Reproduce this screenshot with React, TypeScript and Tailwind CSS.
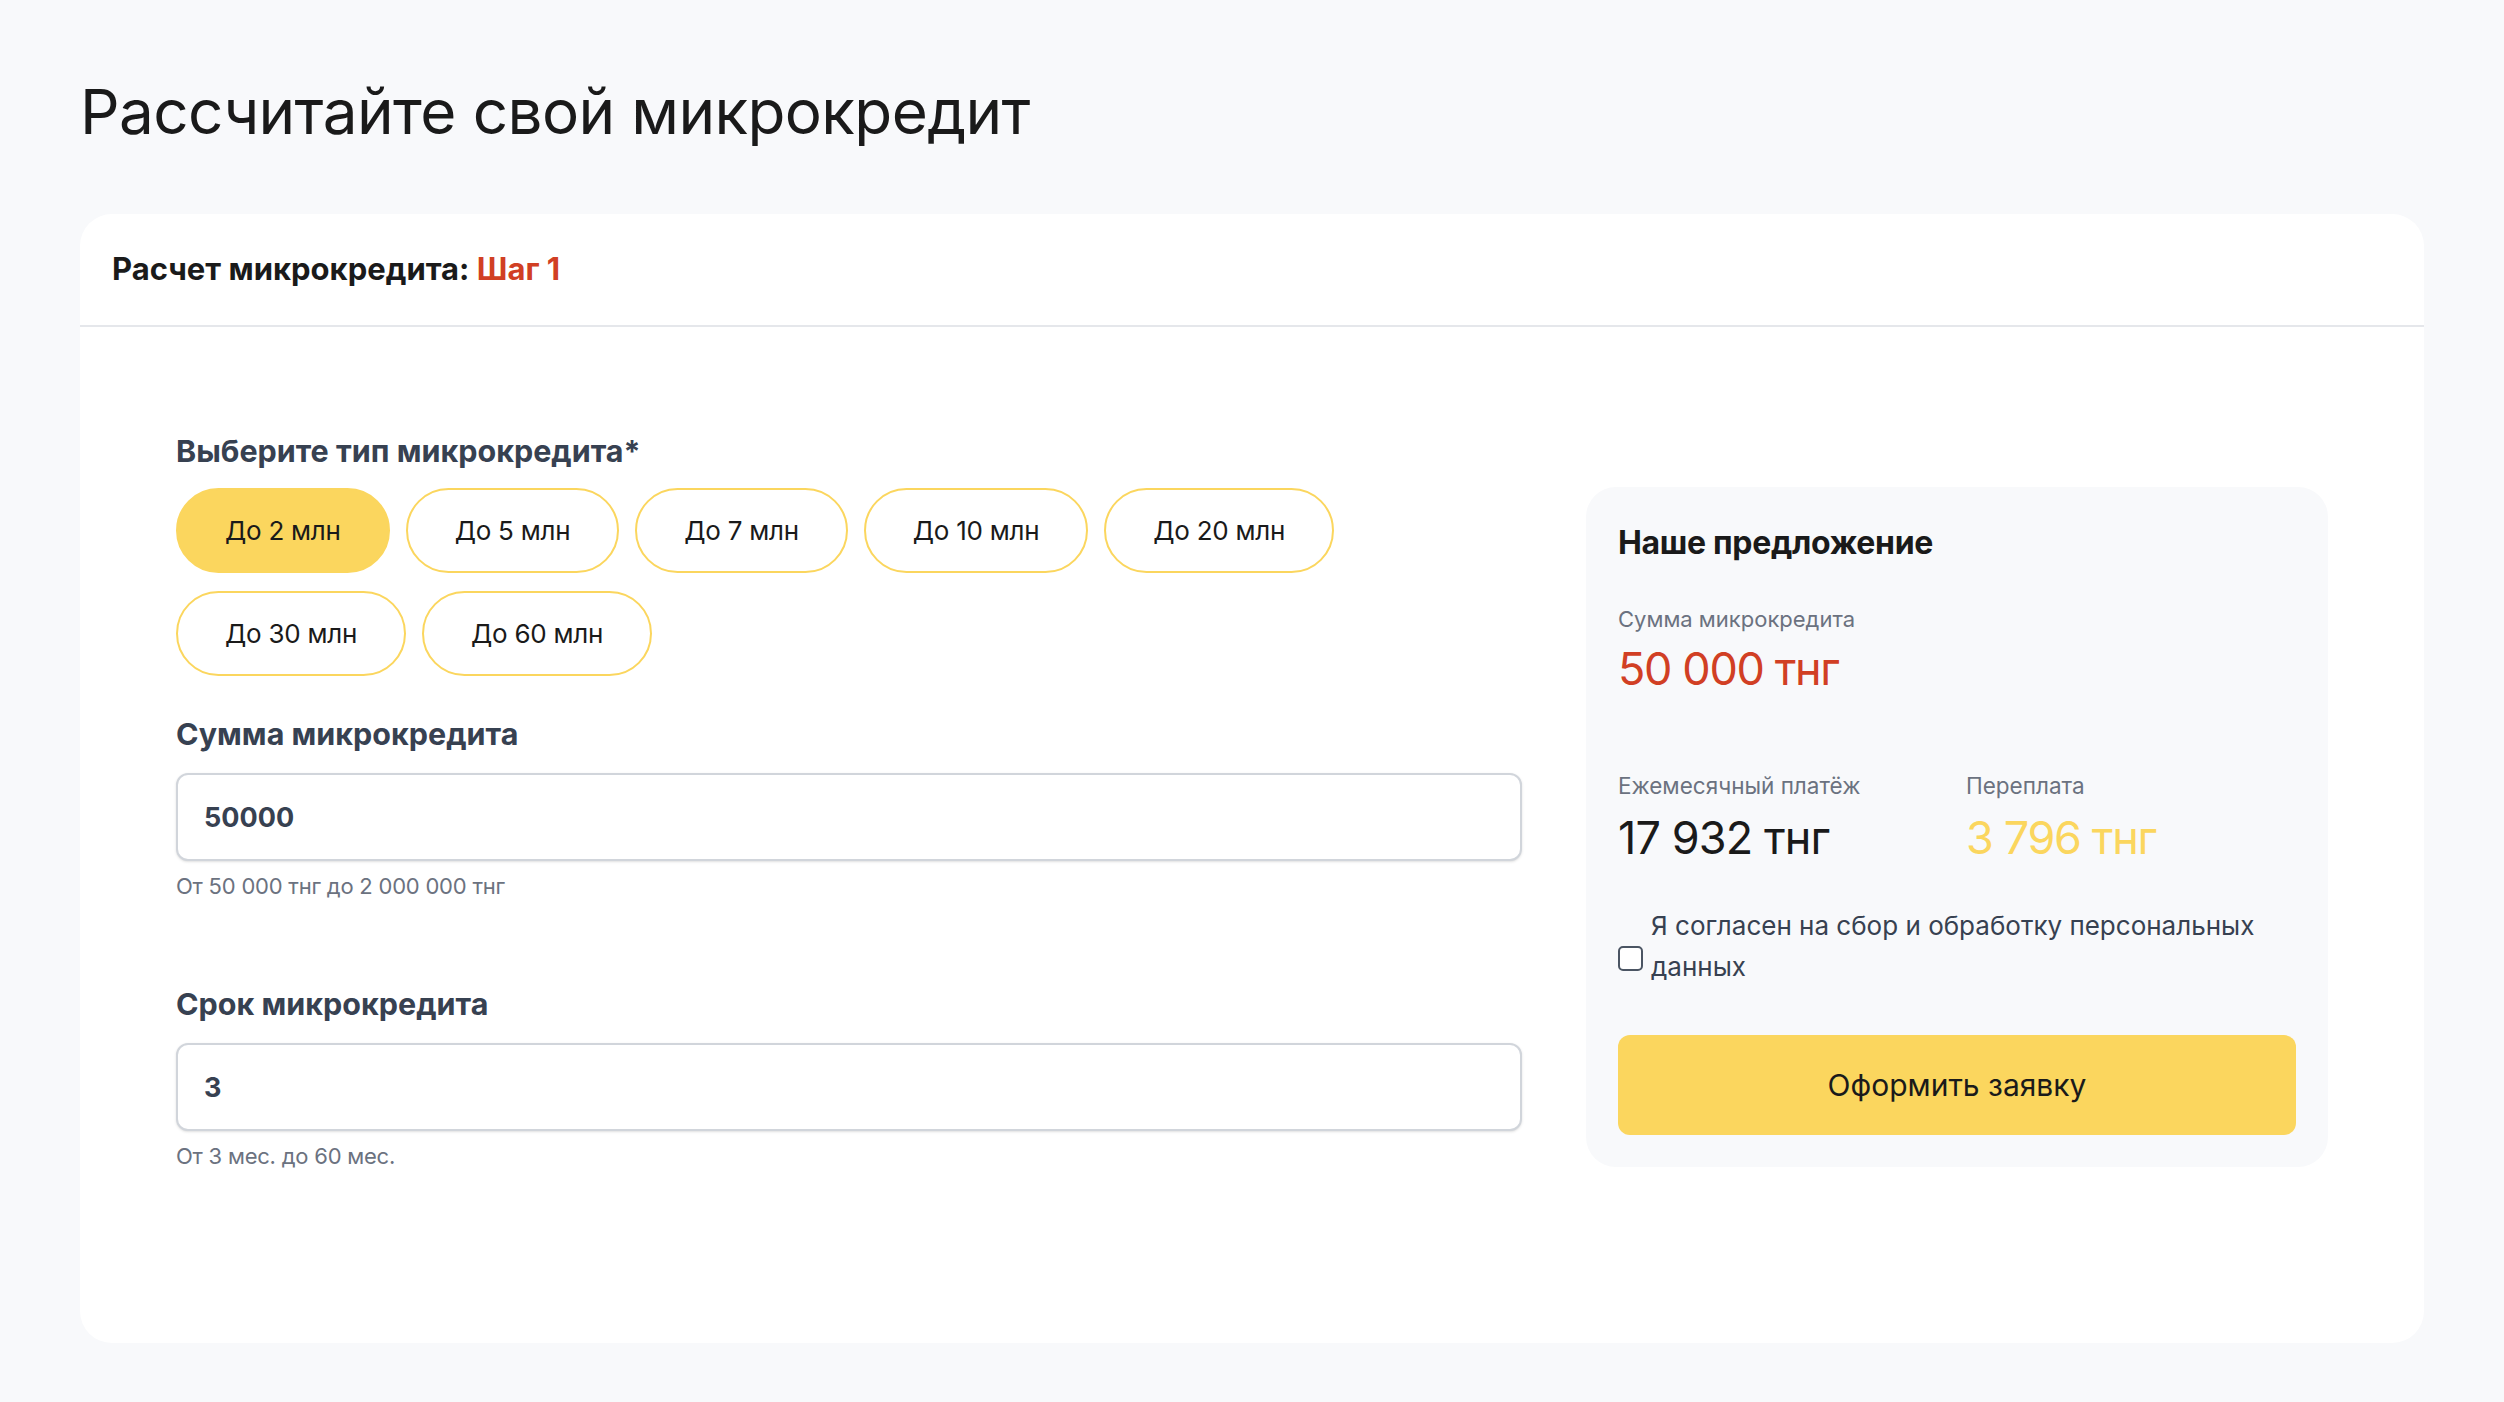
import { useState } from "react";

const types = [
  "До 2 млн",
  "До 5 млн",
  "До 7 млн",
  "До 10 млн",
  "До 20 млн",
  "До 30 млн",
  "До 60 млн",
];

export default function App() {
  const [selected, setSelected] = useState(0);
  const [amount, setAmount] = useState("50000");
  const [term, setTerm] = useState("3");
  const [agree, setAgree] = useState(false);

  return (
    <div className="min-h-screen bg-[#f8f9fb] px-20 pt-[74px] pb-16 font-['Inter','Noto_Sans',sans-serif] text-[#1a1a1a]">
      <h1 className="text-[62px] leading-[75px] tracking-[-0.01em] font-normal">
        Рассчитайте свой микрокредит
      </h1>

      <div className="mt-[65px] rounded-[32px] bg-white">
        {/* Header */}
        <div className="flex h-[113px] items-center border-b-2 border-[#e5e7eb] px-8">
          <h2 className="text-[31px] font-bold">
            Расчет микрокредита: <span className="text-[#d13f24]">Шаг 1</span>
          </h2>
        </div>

        {/* Body */}
        <div className="grid grid-cols-[1fr_742px] items-start gap-x-16 px-24 pt-[104px] pb-[172px]">
          <div>
            <p className="text-[30.5px] leading-[39px] font-bold text-[#374151]">
              Выберите тип микрокредита*
            </p>
            <div className="mt-[18px] flex max-w-[1200px] flex-wrap gap-x-4 gap-y-[18px]">
              {types.map((t, i) => (
                <button
                  key={t}
                  onClick={() => setSelected(i)}
                  className={
                    i === selected
                      ? "h-[85px] rounded-full border-2 border-[#fbd65e] bg-[#fbd65e] px-[47px] text-[26px] tracking-[-0.01em] text-[#1a1a1a]"
                      : "h-[85px] rounded-full border-2 border-[#fbd65e] bg-white px-[47px] text-[26px] tracking-[-0.01em] text-[#1a1a1a]"
                  }
                >
                  {t}
                </button>
              ))}
            </div>

            <p className="mt-[38px] text-[30.5px] leading-[39px] font-bold text-[#374151]">
              Сумма микрокредита
            </p>
            <input
              value={amount}
              onChange={(e) => setAmount(e.target.value)}
              className="mt-[20px] h-[88px] w-full rounded-xl border-2 border-[#d1d5db] bg-white px-[26px] text-[27px] font-bold text-[#374151] shadow-sm outline-none"
            />
            <p className="mt-[10px] text-[22px] leading-[30px] text-[#6b7280] tracking-[-0.01em]">
              От 50 000 тнг до 2 000 000 тнг
            </p>

            <p className="mt-[83px] text-[30.5px] leading-[39px] font-bold text-[#374151]">
              Срок микрокредита
            </p>
            <input
              value={term}
              onChange={(e) => setTerm(e.target.value)}
              className="mt-[20px] h-[88px] w-full rounded-xl border-2 border-[#d1d5db] bg-white px-[26px] text-[27px] font-bold text-[#374151] shadow-sm outline-none"
            />
            <p className="mt-[10px] text-[22px] leading-[30px] text-[#6b7280] tracking-[-0.01em]">
              От 3 мес. до 60 мес.
            </p>
          </div>

          {/* Offer */}
          <div className="mt-[56px] rounded-[30px] bg-[#f8f9fb] p-8">
            <h3 className="text-[32px] leading-[48px] font-bold tracking-[-0.01em]">
              Наше предложение
            </h3>
            <p className="mt-[37px] text-[22px] leading-[30px] text-[#6b7280]">
              Сумма микрокредита
            </p>
            <p className="mt-[8px] text-[45px] leading-[54px] text-[#d13f24] tracking-[-0.03em]">
              50 000 тнг
            </p>

            <div className="mt-[75px] grid grid-cols-[348px_1fr]">
              <div>
                <p className="text-[22.5px] leading-[30px] text-[#6b7280]">
                  Ежемесячный платёж
                </p>
                <p className="mt-[10px] text-[45px] leading-[54px] tracking-[-0.02em]">
                  17 932 тнг
                </p>
              </div>
              <div>
                <p className="text-[22.5px] leading-[30px] text-[#6b7280]">
                  Переплата
                </p>
                <p className="mt-[10px] text-[45px] leading-[54px] text-[#fbd65e] tracking-[-0.03em]">
                  3 796 тнг
                </p>
              </div>
            </div>

            <label className="mt-[40px] flex items-start gap-2">
              <input
                type="checkbox"
                checked={agree}
                onChange={(e) => setAgree(e.target.checked)}
                className="mt-[41px] h-[25px] w-[25px] shrink-0 appearance-none rounded-[5px] border-2 border-[#4b5563] bg-white checked:bg-[#fbd65e]"
              />
              <span className="text-[26px] leading-[41px] text-[#374151]">
                Я согласен на сбор и обработку персональных данных
              </span>
            </label>

            <button className="mt-[48px] h-[100px] w-full rounded-xl bg-[#fbd65e] text-[30px] text-[#1a1a1a]">
              Оформить заявку
            </button>
          </div>
        </div>
      </div>
    </div>
  );
}
